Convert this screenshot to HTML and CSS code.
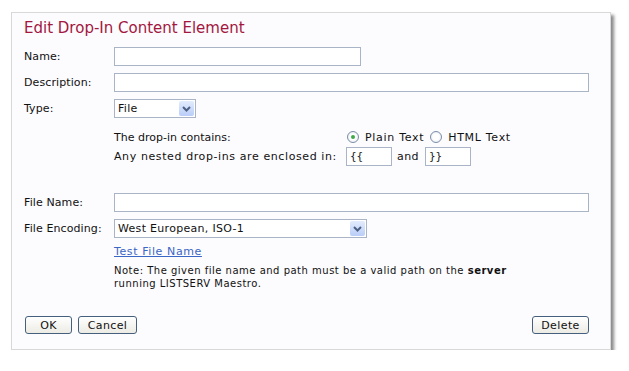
FILE: index.html
```html
<!DOCTYPE html>
<html lang="en">
<head>
    <meta charset="UTF-8">
    <title>Edit Drop-In Content Element</title>
    <link rel="stylesheet" href="styles.css">
</head>
<body>

    <div class="panel">
        <h1>Edit Drop-In Content Element</h1>

        <!-- main fields -->
        <div class="row">
            <label class="label">Name:</label>
            <input type="text" class="field name-field">
        </div>
        <div class="row">
            <label class="label">Description:</label>
            <input type="text" class="field wide-field">
        </div>
        <div class="row">
            <label class="label">Type:</label>
            <div class="select type-select">
                <span class="select-text">File</span>
                <span class="select-arrow">
                    <svg width="9" height="6" viewBox="0 0 9 6"><path d="M1 1 L4.5 4.5 L8 1" fill="none" stroke="#4d6185" stroke-width="2"/></svg>
                </span>
            </div>
        </div>

        <!-- drop-in options -->
        <div class="options">
            <div class="opt-row">
                <span class="opt-label">The drop-in contains:</span>
                <span class="opt-value">
                    <span class="radio checked"></span>
                    <span class="radio-text">Plain Text</span>
                    <span class="radio"></span>
                    <span class="radio-text">HTML Text</span>
                </span>
            </div>
            <div class="opt-row">
                <span class="opt-label long">Any nested drop-ins are enclosed in:</span>
                <span class="opt-value">
                    <input type="text" class="field brace-field" value="{{">
                    <span class="and">and</span>
                    <input type="text" class="field brace-field" value="}}">
                </span>
            </div>
        </div>

        <!-- file -->
        <div class="row file-row">
            <label class="label">File Name:</label>
            <input type="text" class="field wide-field">
        </div>
        <div class="row">
            <label class="label">File Encoding:</label>
            <div class="select enc-select">
                <span class="select-text">West European, ISO-1</span>
                <span class="select-arrow">
                    <svg width="9" height="6" viewBox="0 0 9 6"><path d="M1 1 L4.5 4.5 L8 1" fill="none" stroke="#4d6185" stroke-width="2"/></svg>
                </span>
            </div>
        </div>
        <div class="indent">
            <a href="#" class="test-link">Test File Name</a>
            <p class="note">Note: The given file name and path must be a valid path on the <b>server</b><br>running LISTSERV Maestro.</p>
        </div>

        <!-- buttons -->
        <div class="buttons">
            <button class="btn ok-btn">OK</button>
            <button class="btn cancel-btn">Cancel</button>
            <span class="spacer"></span>
            <button class="btn delete-btn">Delete</button>
        </div>
    </div>

</body>
</html>
```

FILE: styles.css
```css
/* page */
body {
    margin: 0;
    background-color: #ffffff;
    font-family: "DejaVu Sans", Verdana, sans-serif;
    font-size: 11px;
    color: #111;
}

/* dialog box */
.panel {
    box-sizing: border-box;
    width: 600px;
    height: 338px;
    margin: 12px 0 0 11px;
    padding: 6px 21px 0 12px;
    background-color: #fcfbfe;
    border: 1px solid #d8d8d8;
    box-shadow: 3px 3px 3px #8a8a8a;
}

h1 {
    margin: 0 0 10px 0;
    font-size: 15px;
    line-height: 18px;
    font-weight: normal;
    color: #a3173f;
}

/* label + field rows */
.row {
    display: flex;
    align-items: center;
    height: 19px;
    margin-bottom: 7px;
}

.label {
    width: 90px;
    flex-shrink: 0;
    letter-spacing: 0.1px;
}

.field {
    box-sizing: border-box;
    height: 19px;
    margin: 0;
    padding: 1px 3px;
    border: 1px solid #a9b5c6;
    background-color: #ffffff;
    font-family: "DejaVu Sans Mono", monospace;
    font-size: 11px;
    color: #222;
}

.name-field {
    width: 247px;
}

.wide-field {
    width: 478px;
}

/* drop-down boxes */
.select {
    box-sizing: border-box;
    display: flex;
    align-items: center;
    height: 19px;
    border: 1px solid #a9b5c6;
    background-color: #ffffff;
}

.type-select {
    width: 82px;
}

.enc-select {
    width: 253px;
}

.select-text {
    flex: 1;
    padding-left: 3px;
    letter-spacing: 0.3px;
}

.select-arrow {
    display: flex;
    align-items: center;
    justify-content: center;
    width: 15px;
    height: 15px;
    margin-right: 1px;
    border-radius: 2px;
    background: linear-gradient(#e3ecfd, #b9cdf8);
}

/* drop-in options */
.options {
    margin: 9px 0 0 90px;
}

.opt-row {
    display: flex;
    align-items: center;
    height: 20px;
}

.opt-row + .opt-row {
    height: 19px;
}

.opt-label {
    width: 232px;
}

.opt-label.long {
    letter-spacing: 0.6px;
}

.opt-value {
    display: flex;
    align-items: center;
}

.radio {
    box-sizing: border-box;
    display: inline-block;
    width: 12px;
    height: 12px;
    margin: 0 6px 0 1px;
    border: 1px solid #7b8ea8;
    border-radius: 50%;
    background: radial-gradient(#ffffff 40%, #dfe3ea);
    position: relative;
}

.radio-text {
    letter-spacing: 0.7px;
    margin-right: 5px;
}

.radio.checked::after {
    content: "";
    position: absolute;
    left: 3px;
    top: 3px;
    width: 4px;
    height: 4px;
    border-radius: 50%;
    background-color: #3fa94a;
}

.brace-field {
    width: 46px;
}

.and {
    margin: 0 6px 0 5px;
    letter-spacing: 0.4px;
}

.file-row {
    margin-top: 27px;
}

/* link and note */
.indent {
    margin-left: 90px;
}

.test-link {
    display: block;
    height: 14px;
    line-height: 14px;
    color: #3a66c4;
    letter-spacing: 0.6px;
}

.note {
    margin: 5px 0 0 0;
    font-size: 10px;
    line-height: 13px;
    letter-spacing: 0.5px;
}

/* buttons */
.buttons {
    display: flex;
    align-items: center;
    margin: 26px 0 0 1px;
}

.spacer {
    flex: 1;
}

.btn {
    box-sizing: border-box;
    height: 18px;
    padding: 0;
    border: 1px solid #45607e;
    border-radius: 3px;
    background: linear-gradient(#ffffff, #ecebe4);
    font-family: "DejaVu Sans", Verdana, sans-serif;
    font-size: 11px;
    letter-spacing: 0.4px;
    color: #111;
}

.ok-btn {
    width: 47px;
    margin-right: 6px;
}

.cancel-btn {
    width: 59px;
}

.delete-btn {
    width: 57px;
}
```
